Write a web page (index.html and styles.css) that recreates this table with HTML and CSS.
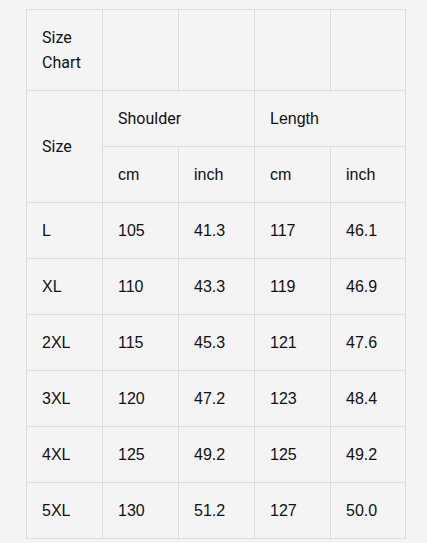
FILE: index.html
```html
<!DOCTYPE html>
<html>
<head>
<meta charset="utf-8">
<link rel="stylesheet" href="styles.css">
</head>
<body>
<div class="wrap">
<table class="chart">
  <colgroup>
    <col class="c"><col class="c"><col class="c"><col class="c"><col class="c-last">
  </colgroup>
  <tr>
    <td class="hd">Size<br>Chart</td>
    <td></td><td></td><td></td><td></td>
  </tr>
  <tr>
    <td class="hd" rowspan="2">Size</td>
    <td class="hd" colspan="2">Shoulder</td>
    <td colspan="2">Length</td>
  </tr>
  <tr>
    <td>cm</td><td>inch</td><td>cm</td><td>inch</td>
  </tr>
  <tr><td>L</td><td>105</td><td>41.3</td><td>117</td><td>46.1</td></tr>
  <tr><td>XL</td><td>110</td><td>43.3</td><td>119</td><td>46.9</td></tr>
  <tr><td>2XL</td><td>115</td><td>45.3</td><td>121</td><td>47.6</td></tr>
  <tr><td>3XL</td><td>120</td><td>47.2</td><td>123</td><td>48.4</td></tr>
  <tr><td>4XL</td><td>125</td><td>49.2</td><td>125</td><td>49.2</td></tr>
  <tr><td>5XL</td><td>130</td><td>51.2</td><td>127</td><td>50.0</td></tr>
</table>
</div>
</body>
</html>
```
FILE: styles.css
```css
html, body {
  margin: 0;
  background: #f4f4f4;
}
.wrap {
  padding: 9px 0 0 26px;
}
.chart {
  border-collapse: collapse;
  table-layout: fixed;
  width: 380px;
  font-family: "Liberation Sans", Arial, sans-serif;
  font-size: 16px;
  color: #111111;
}
.chart col.c {
  width: 76px;
}
.chart col.c-last {
  width: 75px;
}
.chart td {
  border: 1px solid #dddddd;
  padding: 15px 15px;
  line-height: 25px;
  text-align: left;
  vertical-align: middle;
}
.chart td.hd {
  font-family: Roboto, "Liberation Sans", sans-serif;
}
```
